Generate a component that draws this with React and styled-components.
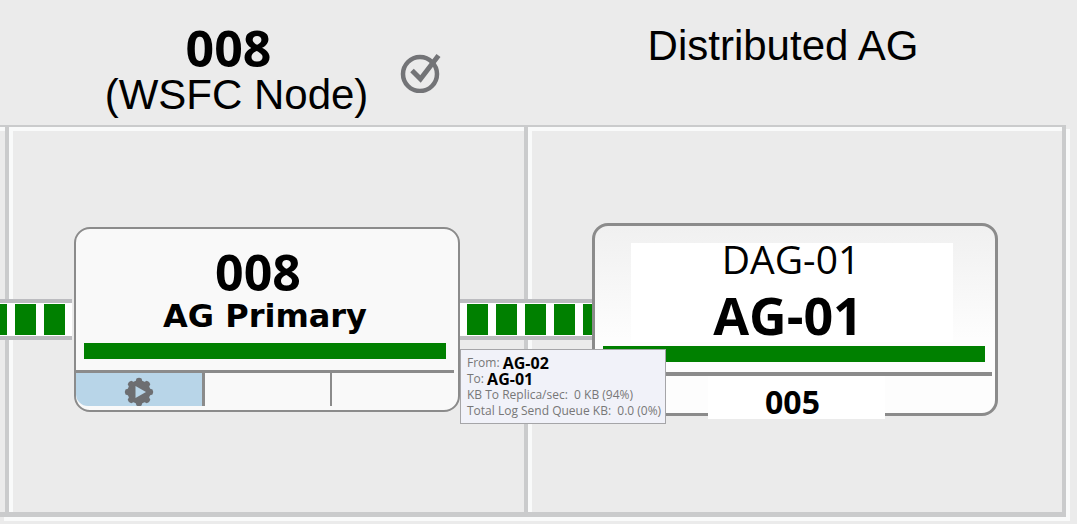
import React from 'react'
import styled, { createGlobalStyle } from 'styled-components'

const GlobalStyle = createGlobalStyle`
  * {
    box-sizing: border-box;
  }
  body {
    margin: 0;
    background: #ebebeb;
    color: #000;
    font-family: "Open Sans", "Noto Sans", sans-serif;
  }
`
const Page = styled.main`
  display: grid;
  grid-template-rows: 125px 1fr;
  min-height: 100vh;
  padding: 0 11px 7px 0;
`
const Header = styled.header`
  display: grid;
  grid-template-columns: 5px 519fr 542fr;
`
const HeaderCell = styled.div`
  grid-column: ${(props) => props.$column};
  display: flex;
  justify-content: center;
  gap: 32px;
  padding: ${(props) => props.$padding};
`
const HeaderText = styled.h2`
  margin: 0;
  font-family: "Liberation Sans", Arial, sans-serif;
  font-size: 42px;
  font-weight: 400;
  line-height: 48px;
  text-align: center;
  white-space: nowrap;
`
const NodeNumber = styled.span`
  display: block;
  padding-right: 16px;
  font-family: "Open Sans", "Noto Sans", sans-serif;
  font-size: 50px;
  font-weight: 700;
  line-height: 46px;
`
const StatusIcon = styled.svg`
  width: 42px;
  height: 44px;
  margin-top: 24px;
`
const Board = styled.section`
  display: grid;
  border: solid #cacbcc;
  border-width: 2px 4px 5px 0;
  box-shadow: 4px 4px 0 #f9fafa;
`
const Lanes = styled.div`
  grid-area: 1 / 1;
  display: grid;
  grid-template-columns: 5px 519fr 538fr;
`
const Lane = styled.div`
  border-left: ${(props) => (props.$first ? 0 : '4px')} solid #cacbcc;
  box-shadow: inset ${(props) => (props.$first ? 0 : '4px')} 4px 0 #f9fafa;
`
const Diagram = styled.div`
  grid-area: 1 / 1;
  z-index: 1;
  display: grid;
  grid-template-columns: 74fr 386fr 132fr 406fr 64fr;
  align-items: center;
`
const Connector = styled.div`
  position: relative;
  height: 41px;
  margin-right: ${(props) => props.$gap || 0};
  border: solid #bcbcc0;
  border-width: 4px 0;
  background: repeating-linear-gradient(
    to right,
    #fff 0 8px,
    #008000 8px 29px
  ) ${(props) => props.$offset} 1px / 29px 31px repeat-x #fff;
`
const Node = styled.article`
  display: flex;
  flex-direction: column;
  border: ${(props) => props.$line} solid #8b8b8b;
  border-radius: 16px;
  background: ${(props) => props.$background};
  text-align: center;
`
const NodeBody = styled.div`
  padding: ${(props) => props.$padding};
`
const Title = styled.div`
  padding-right: ${(props) => props.$indent || 0};
  font-size: ${(props) => props.$size};
  font-weight: 700;
  line-height: ${(props) => props.$height};
`
const Role = styled.div`
  margin-bottom: 8px;
  font-family: "DejaVu Sans", Verdana, sans-serif;
  font-size: 32px;
  font-weight: 700;
  line-height: 38px;
`
const Label = styled.div`
  height: 99px;
  margin: 0 32px 4px 28px;
  background: #fff;
`
const Subtitle = styled.div`
  padding-right: 2px;
  font-size: 39px;
  line-height: 32px;
`
const Health = styled.div`
  height: 16px;
  background: #008000;
`
const Actions = styled.div`
  display: grid;
  grid-template-columns: 129fr 127fr 126fr;
  height: 40px;
  padding-bottom: 4px;
`
const Action = styled.button`
  display: flex;
  justify-content: center;
  align-items: flex-start;
  height: 36px;
  padding: 4px 0 0;
  overflow: hidden;
  border: solid #8b8b8b;
  border-width: 3px ${(props) => props.$line} 0 0;
  border-bottom-left-radius: ${(props) => (props.$active ? '12px' : 0)};
  background: ${(props) => (props.$active ? '#b8d5e8' : 'transparent')};
  cursor: pointer;

  &:last-child {
    margin-right: 4px;
  }
`
const Footer = styled.div`
  height: 41px;
  margin-right: 3px;
  border-top: 4px solid #8b8b8b;
`
const Replica = styled.div`
  width: 177px;
  height: 43px;
  margin: 0 auto 0 113px;
  padding: 3px 8px 0 0;
  background: #fff;
  font-size: 32px;
  font-weight: 700;
  line-height: 46px;
  text-align: center;
`
const Tooltip = styled.div`
  position: absolute;
  top: 46px;
  left: 0;
  z-index: 2;
  padding: 5px 4px 4px 6px;
  border: 1px solid #a5a5a8;
  background: #f1f2f9;
  color: #777;
  font-size: 12px;
  line-height: 16px;
  white-space: pre;
`
const TooltipRow = styled.div`
  display: flex;
  align-items: center;
  height: 16px;

  b {
    color: #000;
    font-size: 16px;
  }
`

const CheckIcon = () => (
  <StatusIcon viewBox="0 0 42 44" fill="none" stroke="#737477" role="img" aria-label="Healthy">
    <circle cx="20" cy="25" r="17" strokeWidth="4.5" />
    <path d="M12 21.500L20.500 30L38.500 6.500" strokeWidth="5" />
  </StatusIcon>
)

const teeth = [0, 45, 90, 135, 180, 225, 270, 315]

const GearIcon = () => (
  <svg width="30" height="30" viewBox="0 0 30 30" fill="#6d6e71">
    <circle cx="15" cy="15" r="11.500" />
    {teeth.map((angle) => (
      <path key={angle} d="M11 6L12.500 1.500Q15 0 17.500 1.500L19 6Z" transform={`rotate(${angle} 15 15)`} />
    ))}
    <path d="M11.500 9L22 15L11.500 21Z" fill="#b8d5e8" />
  </svg>
)

const App = () => {
  return (
    <Page>
      <GlobalStyle />
      <Header>
        <HeaderCell $column={2} $padding="25px 0 0 18px">
          <HeaderText>
            <NodeNumber>008</NodeNumber>
            (WSFC Node)
          </HeaderText>
          <CheckIcon />
        </HeaderCell>
        <HeaderCell $column={3} $padding="22px 24px 0 0">
          <HeaderText>Distributed AG</HeaderText>
        </HeaderCell>
      </Header>

      <Board>
        <Lanes>
          <Lane $first />
          <Lane />
          <Lane />
        </Lanes>
        <Diagram>
          <Connector $offset="7px" $gap="2px" />
          <Node $line="2px" $background="#f9f9f9">
            <NodeBody $padding="18px 12px 11px 8px">
              <Title $size="50px" $height="50px" $indent="14px">008</Title>
              <Role>AG Primary</Role>
              <Health />
            </NodeBody>
            <Actions>
              <Action $active $line="3px" aria-label="Run">
                <GearIcon />
              </Action>
              <Action $line="2px" aria-label="Second action" />
              <Action $line="0" aria-label="Third action" />
            </Actions>
          </Node>
          <Connector $offset="-1px">
            <Tooltip role="tooltip">
              <TooltipRow>From: <b>AG-02</b></TooltipRow>
              <TooltipRow>To: <b>AG-01</b></TooltipRow>
              <TooltipRow>KB To Replica/sec:  0 KB (94%)</TooltipRow>
              <TooltipRow>Total Log Send Queue KB:  0.0 (0%)</TooltipRow>
            </Tooltip>
          </Connector>
          <Node $line="3px" $background="linear-gradient(#f0f0f0, #fdfdfd 60%)">
            <NodeBody $padding="17px 10px 10px 8px">
              <Label>
                <Subtitle>DAG-01</Subtitle>
                <Title $size="52px" $height="80px" $indent="8px">AG-01</Title>
              </Label>
              <Health />
            </NodeBody>
            <Footer>
              <Replica>005</Replica>
            </Footer>
          </Node>
        </Diagram>
      </Board>
    </Page>
  )
}

export default App
